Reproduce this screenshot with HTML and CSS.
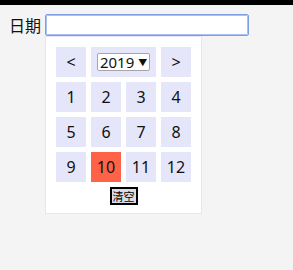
FILE: index.html
```html
<!DOCTYPE html>
<html lang="zh">
<head>
    <meta charset="utf-8">
    <title>日期</title>
    <link rel="stylesheet" href="styles.css">
</head>
<body>
  <div class="topbar"></div>
  <div class="form-row">
    <label class="field-label" for="date">日期</label>
    <div class="picker">
      <input id="date" class="date-input" type="text">
      <div class="month-panel">
        <div class="month-grid">
          <div class="cell">&lt;</div>
          <div class="cell year-cell"><span class="year-select">2019 <span class="caret">▼</span></span></div>
          <div class="cell">&gt;</div>
          <div class="cell">1</div>
          <div class="cell">2</div>
          <div class="cell">3</div>
          <div class="cell">4</div>
          <div class="cell">5</div>
          <div class="cell">6</div>
          <div class="cell">7</div>
          <div class="cell">8</div>
          <div class="cell">9</div>
          <div class="cell current">10</div>
          <div class="cell">11</div>
          <div class="cell">12</div>
        </div>
        <div class="panel-foot">
          <button class="clear-btn" type="button">清空</button>
        </div>
      </div>
    </div>
  </div>
</body>
</html>
```

FILE: styles.css
```css
html, body {
  margin: 0;
  padding: 0;
  height: 100%;
  background-color: #f4f4f4;
  font-family: "Noto Sans", "Noto Sans CJK SC", sans-serif;
  color: #111;
}

.topbar {
  height: 5px;
  background: #000;
}

.form-row {
  display: flex;
  align-items: center;
  padding: 9px 0 0 9px;
}

.field-label {
  font-family: "Noto Sans CJK SC", sans-serif;
  font-size: 16px;
  line-height: 22px;
  margin-right: 4px;
}

.picker {
  position: relative;
}

.date-input {
  display: block;
  box-sizing: border-box;
  width: 204px;
  height: 22px;
  margin: 0;
  padding: 0 4px;
  border: 1px solid #7d9fe2;
  border-radius: 2px;
  outline: 1px solid #a9c1f0;
  outline-offset: -2px;
  background: #fff;
}

.month-panel {
  position: absolute;
  top: 22px;
  left: 0;
  width: 157px;
  box-sizing: border-box;
  padding: 10px 10px 8px;
  border: 1px solid #e6e6f2;
  background: #fff;
}

.month-grid {
  display: grid;
  grid-template-columns: repeat(4, 30px);
  grid-auto-rows: 30px;
  gap: 5px;
}

.cell {
  display: flex;
  align-items: center;
  justify-content: center;
  background: #e6e6fa;
  font-size: 16px;
}

.year-cell {
  grid-column: span 2;
}

.year-select {
  box-sizing: border-box;
  width: 53px;
  height: 18px;
  border: 1px solid #a6a6a6;
  border-radius: 2px;
  background: #fff;
  font-size: 15px;
  line-height: 16px;
  text-align: center;
}

.caret {
  font-size: 9px;
  vertical-align: 2px;
}

.cell.current {
  background: #ff6347;
}

.panel-foot {
  display: flex;
  justify-content: center;
  padding-top: 5px;
}

.clear-btn {
  margin: 0;
  padding: 0 1px;
  height: 18px;
  border: 2px solid #000;
  background: #dcdce8;
  font-family: "Noto Sans CJK SC", sans-serif;
  font-size: 11px;
  line-height: 14px;
  white-space: nowrap;
  color: #000;
}
```
